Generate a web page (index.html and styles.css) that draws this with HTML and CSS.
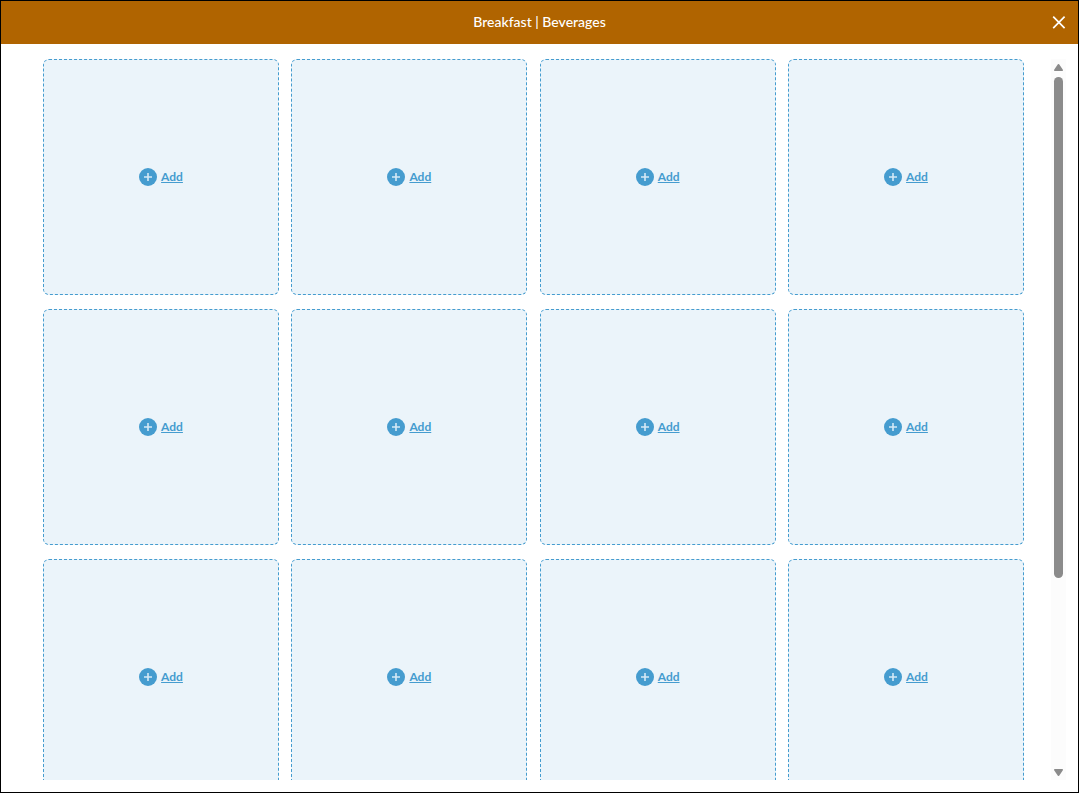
FILE: index.html
```html
<!DOCTYPE html>
<html lang="en">
<head>
	<meta charset="utf-8">
	<title>Breakfast | Beverages</title>
	<meta name="viewport" content="width=device-width,initial-scale=1.0">
	<link rel="stylesheet" href="styles.css">
</head>
<body>

<svg class="sprite" aria-hidden="true">
	<symbol id="plus" viewBox="0 0 18 18">
		<circle cx="9" cy="9" r="9" fill="#459ccf"/>
		<path d="M9 5v8M5 9h8" stroke="#d5e9f6" stroke-width="1.6"/>
	</symbol>
</svg>

<div class="modal">
	<header class="modal-header">
		<h1 class="title">Breakfast | Beverages</h1>
		<button type="button" class="close" aria-label="Close">
			<svg width="14" height="14" viewBox="0 0 14 14"><path d="M1.2 1.7l11.4 11.4M12.6 1.7L1.2 13.1" stroke="#fff" stroke-width="1.7"/></svg>
		</button>
	</header>

	<main class="modal-body">
		<div class="slots">
			<div class="slot"><a href="#" class="add"><svg class="icon"><use href="#plus"/></svg><span>Add</span></a></div>
			<div class="slot"><a href="#" class="add"><svg class="icon"><use href="#plus"/></svg><span>Add</span></a></div>
			<div class="slot"><a href="#" class="add"><svg class="icon"><use href="#plus"/></svg><span>Add</span></a></div>
			<div class="slot"><a href="#" class="add"><svg class="icon"><use href="#plus"/></svg><span>Add</span></a></div>

			<div class="slot"><a href="#" class="add"><svg class="icon"><use href="#plus"/></svg><span>Add</span></a></div>
			<div class="slot"><a href="#" class="add"><svg class="icon"><use href="#plus"/></svg><span>Add</span></a></div>
			<div class="slot"><a href="#" class="add"><svg class="icon"><use href="#plus"/></svg><span>Add</span></a></div>
			<div class="slot"><a href="#" class="add"><svg class="icon"><use href="#plus"/></svg><span>Add</span></a></div>

			<div class="slot"><a href="#" class="add"><svg class="icon"><use href="#plus"/></svg><span>Add</span></a></div>
			<div class="slot"><a href="#" class="add"><svg class="icon"><use href="#plus"/></svg><span>Add</span></a></div>
			<div class="slot"><a href="#" class="add"><svg class="icon"><use href="#plus"/></svg><span>Add</span></a></div>
			<div class="slot"><a href="#" class="add"><svg class="icon"><use href="#plus"/></svg><span>Add</span></a></div>
		</div>
		<div class="scrollbar" aria-hidden="true">
			<svg class="arrow" viewBox="0 0 9 7"><path d="M4.5 .8L8.2 6.2H.8z" fill="#8b8b8b" stroke="#8b8b8b" stroke-width="1.6" stroke-linejoin="round"/></svg>
			<div class="track"><div class="thumb"></div></div>
			<svg class="arrow" viewBox="0 0 9 7"><path d="M4.5 6.2L.8 .8h7.4z" fill="#8b8b8b" stroke="#8b8b8b" stroke-width="1.6" stroke-linejoin="round"/></svg>
		</div>
	</main>
</div>

</body>
</html>
```

FILE: styles.css
```css
* {
  box-sizing: border-box;
}

body {
  margin: 0;
  font-family: Lato, "Liberation Sans", sans-serif;
  background: #fff;
}

.sprite {
  position: absolute;
  width: 0;
  height: 0;
}

.modal {
  display: flex;
  flex-direction: column;
  height: 100vh;
  border: 1px solid #000;
}

.modal-header {
  display: grid;
  grid-template-columns: 1fr auto 1fr;
  align-items: center;
  height: 43px;
  padding: 0 12px 1px;
  background: #b06400;
  color: #fff;
}

.title {
  grid-column: 2;
  margin: 0;
  font-size: 14px;
  font-weight: 500;
  line-height: 20px;
}

.close {
  display: flex;
  justify-self: end;
  padding: 0;
  border: none;
  background: none;
  cursor: pointer;
}

.modal-body {
  display: flex;
  flex: 1;
  min-height: 0;
  padding: 15px 12px 12px 42px;
}

.slots {
  display: grid;
  grid-template-columns: repeat(auto-fill, 236px);
  grid-auto-rows: 236px;
  justify-content: space-between;
  gap: 14px 12px;
  flex: 1;
  padding-right: 27px;
  overflow-y: auto;
  scrollbar-width: none;
}

.slot {
  display: flex;
  align-items: center;
  justify-content: center;
  border: 1px dashed #459ccf;
  border-radius: 6px;
  background: #ebf4fa;
}

.add {
  display: flex;
  align-items: center;
  gap: 4px;
  color: #459ccf;
  font-size: 12px;
  font-weight: 700;
  line-height: 18px;
}

.icon {
  width: 18px;
  height: 18px;
}

/* scrollbar */
.scrollbar {
  display: flex;
  flex-direction: column;
  align-items: center;
  gap: 6px;
  width: 15px;
  padding: 5px 0 4px;
  background: #fcfcfc;
}

.arrow {
  width: 9px;
  height: 7px;
}

.track {
  flex: 1;
  width: 9px;
}

.thumb {
  height: 73%;
  border-radius: 5px;
  background: #8b8b8b;
}
```
